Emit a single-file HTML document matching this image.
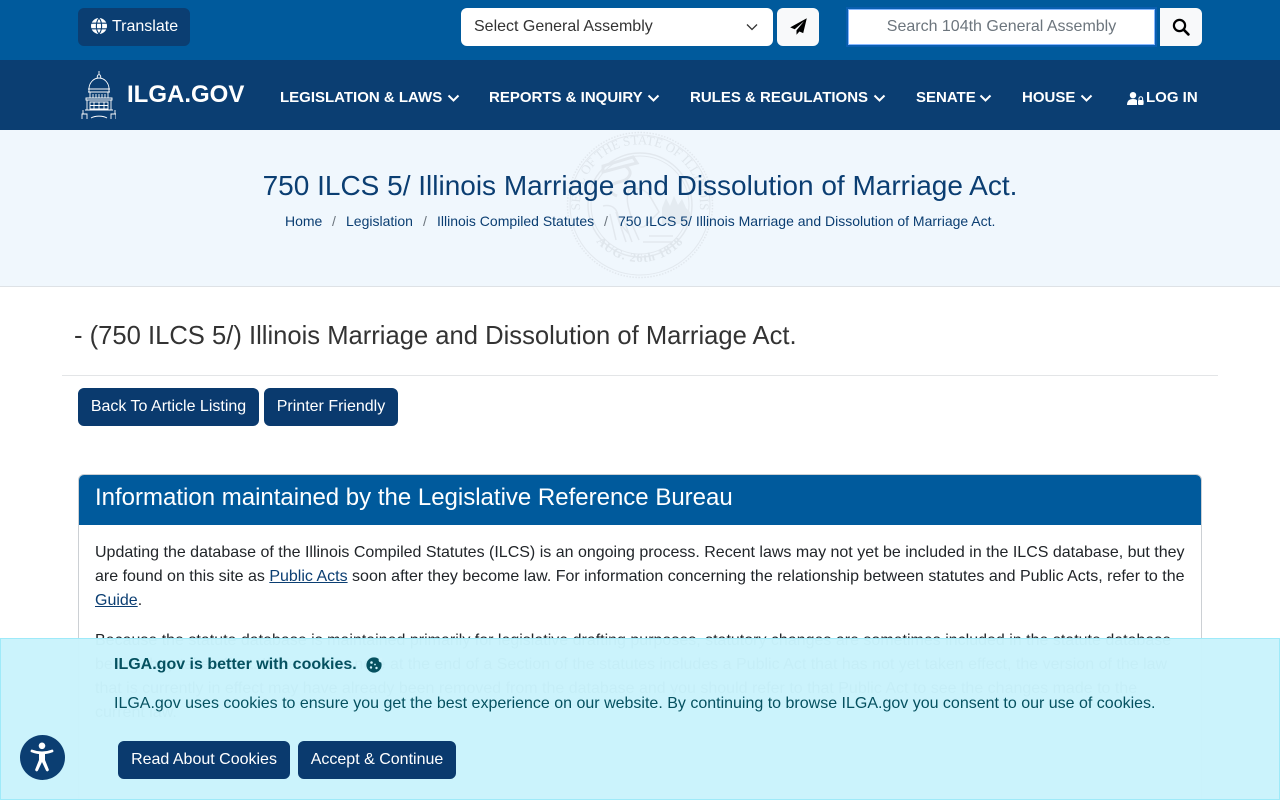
<!DOCTYPE html>
<html lang="en"><head><meta charset="utf-8"><title>750 ILCS 5/ Illinois Marriage and Dissolution of Marriage Act.</title>
<style>
*{box-sizing:border-box}
html,body{margin:0;padding:0;width:1280px;height:800px;overflow:hidden;background:#fff;font-family:"Liberation Sans",sans-serif;font-size:16px;color:#212529}
#w{position:relative;width:1280px;height:800px;overflow:hidden}
.a{position:absolute;white-space:nowrap}
a{color:inherit;text-decoration:none}
.btn{position:absolute;height:38px;line-height:36px;background:#0a3a6e;border:1px solid #0a3a6e;color:#fff;border-radius:6px;text-align:center;white-space:nowrap}
.nav{position:absolute;top:88px;height:20px;line-height:20px;color:#fff;font-weight:700;font-size:15px;white-space:nowrap}
.ch{position:absolute;top:94px}
.p{position:absolute;left:95px;width:1095px;line-height:24px;color:#212529;white-space:nowrap}
</style></head><body><div id="w">
<div class="a" style="left:0;top:0;width:1280px;height:60px;background:#005a9c"></div>
<div class="a" style="left:0;top:60px;width:1280px;height:70px;background:#0b3e72"></div>

<div class="btn" style="left:78px;top:8px;width:112px;background:#0b3e72;border-color:#0b3e72;text-align:left;padding-left:33px">Translate</div>
<svg class="a" style="left:91px;top:18px" width="16" height="16" viewBox="0 0 16 16"><circle cx="8" cy="8" r="8" fill="#fff"/><path d="M0 5.2h16M0 10.8h16M8 0C4.5 4 4.5 12 8 16M8 0c3.500 4 3.500 12 0 16" stroke="#0b3e72" stroke-width="1.100" fill="none"/></svg>

<div class="a" style="left:461px;top:8px;width:312px;height:38px;background:#fff;border-radius:6px;line-height:37px;padding-left:13px;color:#333">Select General Assembly</div>
<svg class="a" style="left:746px;top:23px" width="12" height="8" viewBox="0 0 12 8"><path d="M1 1.500l5 5 5-5" stroke="#333" stroke-width="1.300" fill="none"/></svg>
<div class="a" style="left:777px;top:8px;width:42px;height:38px;background:#f8f9fa;border-radius:6px"></div>
<svg class="a" style="left:790px;top:18px" width="17" height="17" viewBox="0 0 17 17"><path d="M16.800.2L.2 9.400l4.500 1.900L14 3.200 6.500 12.400V16.800l2.900-3.300 3.800 1.600z" fill="#000"/></svg>

<div class="a" style="left:846px;top:7px;width:311px;height:40px;background:#fff;border:2px solid #0a5eb0;box-shadow:inset 0 0 0 1px #86b7fe;line-height:36px;text-align:center;color:#6c757d">Search 104th General Assembly</div>
<div class="a" style="left:1160px;top:8px;width:42px;height:38px;background:#f8f9fa;border-radius:0 6px 6px 0"></div>
<svg class="a" style="left:1172px;top:18px" width="18" height="18" viewBox="0 0 18 18"><circle cx="7.500" cy="7.500" r="5.600" stroke="#000" stroke-width="2.200" fill="none"/><path d="M11.600 11.600l4.800 4.800" stroke="#000" stroke-width="2.600" stroke-linecap="round"/></svg>

<svg class="a" style="left:80px;top:70px" width="36" height="50" viewBox="0 0 36 50" fill="none" stroke="#fff" stroke-width=".9">
<path d="M19 1v3M17.200 8c0-4.500 3.600-4.500 3.600 0M9 19c0-6 4.500-11 10-11s10 5 10 11M8 19h22M9 19v3M29 19v3M8 22h22"/>
<path d="M10 22v6M28 22v6M13 24v4M16 24v4M19 24v4M22 24v4M25 24v4"/>
<path d="M6 28h26v2H6zM7 30v10M31 30v10M10 32h18v7H10zM14 32v7M19 32v7M24 32v7M10 35.500h18M5 40h28"/>
<path d="M2 49v-5h5v5M31 49v-5h5v5M3 44v-4M35 44v-4M11 48c4-2.500 12-2.500 16 0"/>
</svg>
<div class="a" style="left:127px;top:80px;font-size:24px;line-height:30px;font-weight:700;color:#fff">ILGA.GOV</div>

<div class="nav" style="left:280px">LEGISLATION &amp; LAWS</div>
<div class="nav" style="left:489px">REPORTS &amp; INQUIRY</div>
<div class="nav" style="left:690px">RULES &amp; REGULATIONS</div>
<div class="nav" style="left:916px">SENATE</div>
<div class="nav" style="left:1022px">HOUSE</div>
<div class="nav" style="left:1146px">LOG IN</div>
<svg class="ch" style="left:447px" width="13" height="9" viewBox="0 0 13 9"><path d="M1.500 1.500l5 5 5-5" stroke="#fff" stroke-width="2" fill="none"/></svg>
<svg class="ch" style="left:647px" width="13" height="9" viewBox="0 0 13 9"><path d="M1.500 1.500l5 5 5-5" stroke="#fff" stroke-width="2" fill="none"/></svg>
<svg class="ch" style="left:873px" width="13" height="9" viewBox="0 0 13 9"><path d="M1.500 1.500l5 5 5-5" stroke="#fff" stroke-width="2" fill="none"/></svg>
<svg class="ch" style="left:979px" width="13" height="9" viewBox="0 0 13 9"><path d="M1.500 1.500l5 5 5-5" stroke="#fff" stroke-width="2" fill="none"/></svg>
<svg class="ch" style="left:1080px" width="13" height="9" viewBox="0 0 13 9"><path d="M1.500 1.500l5 5 5-5" stroke="#fff" stroke-width="2" fill="none"/></svg>
<svg class="a" style="left:1127px;top:92px" width="17" height="13" viewBox="0 0 17 13" fill="#fff"><circle cx="6" cy="3.200" r="3.200"/><path d="M0 13c0-4 2-6 6-6 2 0 3 .4 4 1.200V13z"/><rect x="11" y="8" width="5.600" height="5" rx="1"/><path d="M12 8V6.500a1.800 1.800 0 0 1 3.600 0V8" fill="none" stroke="#fff"/></svg>

<div class="a" style="left:0;top:130px;width:1280px;height:157px;background:#f0f7fd;border-bottom:1px solid #dee2e6"></div>
<svg class="a" style="left:565px;top:130px" width="150" height="150" viewBox="0 0 150 150" fill="none" stroke="#e2e8ee">
<circle cx="75" cy="75" r="72.500" stroke-width="1.500" stroke-dasharray="1.500 1.500"/><circle cx="75" cy="75" r="70"/><circle cx="75" cy="75" r="52" stroke-width="1.500"/><circle cx="75" cy="75" r="49"/>
<path id="sa" d="M18.500 94.500a60 60 0 1 1 113 0" stroke="none"/><path id="sb" d="M20 90a57 57 0 0 0 110 0" stroke="none"/>
<text font-family="Liberation Serif,serif" font-size="13" fill="#dfe6ec" stroke="none" text-anchor="middle"><textPath href="#sa" startOffset="50%">SEAL OF THE STATE OF ILLINOIS</textPath></text>
<text font-family="Liberation Serif,serif" font-size="12.500" font-weight="700" fill="#dfe6ec" stroke="none" text-anchor="middle" letter-spacing="1"><textPath href="#sb" startOffset="50%">AUG. 26th 1818</textPath></text>
<path d="M38 36l30-9 4 6-12 3-22 6zM60 36c10 6 4 14-6 16s-12 10-2 14" stroke-width="3"/>
<path d="M38 76c8-2 14 2 15 10s6 12 11 18M45 84l6 26M51 82l10 30M58 88l9 24M66 92l8 18M64 60c8-4 18 0 22 8l8 14-14 14c-6 4-12-4-14-10s-6-18-2-26z" stroke-width="1.500"/>
<path d="M97 94V78l4-10 4 8 4-10 4 9 4-6 4 9 4 4v12z" fill="#e4ebf1" stroke="none"/>
<path d="M78 112h30M84 106h24" stroke-width="1.500"/>
</svg>
<div class="a" style="left:0;top:169px;width:1280px;text-align:center;font-size:28px;line-height:34px;color:#0b3e72">750 ILCS 5/ Illinois Marriage and Dissolution of Marriage Act.</div>
<div class="a" style="left:285px;top:212px;font-size:14px;line-height:18px;color:#0b3e72">Home</div>
<div class="a" style="left:332px;top:212px;font-size:14px;line-height:18px;color:#6c757d">/</div>
<div class="a" style="left:346px;top:212px;font-size:14px;line-height:18px;color:#0b3e72">Legislation</div>
<div class="a" style="left:423px;top:212px;font-size:14px;line-height:18px;color:#6c757d">/</div>
<div class="a" style="left:437px;top:212px;font-size:14px;line-height:18px;color:#0b3e72">Illinois Compiled Statutes</div>
<div class="a" style="left:604px;top:212px;font-size:14px;line-height:18px;color:#6c757d">/</div>
<div class="a" style="left:618px;top:212px;font-size:14px;line-height:18px;color:#0b3e72">750 ILCS 5/ Illinois Marriage and Dissolution of Marriage Act.</div>

<div class="a" style="left:74px;top:321px;font-size:25.600px;line-height:30px;color:#333">- (750 ILCS 5/) Illinois Marriage and Dissolution of Marriage Act.</div>
<div class="a" style="left:62px;top:375px;width:1156px;height:1px;background:#e3e5e7"></div>
<div class="btn" style="left:78px;top:388px;width:181px">Back To Article Listing</div>
<div class="btn" style="left:264px;top:388px;width:134px">Printer Friendly</div>

<div class="a" style="left:78px;top:474px;width:1124px;height:340px;border:1px solid #ccd0d4;border-radius:6px;overflow:hidden">
<div style="height:50px;background:#005a9c;color:#fff;font-size:24px;line-height:46px;padding-left:16px">Information maintained by the Legislative Reference Bureau</div>
</div>
<div class="p" style="top:541px">Updating the database of the Illinois Compiled Statutes (ILCS) is an ongoing process. Recent laws may not yet be included in the ILCS database, but they<br>are found on this site as <a style="color:#0b3e72;text-decoration:underline">Public Acts</a> soon after they become law. For information concerning the relationship between statutes and Public Acts, refer to the<br><a style="color:#0b3e72;text-decoration:underline">Guide</a>.</div>
<div class="p" style="top:629px">Because the statute database is maintained primarily for legislative drafting purposes, statutory changes are sometimes included in the statute database<br>before they take effect. If the source note at the end of a Section of the statutes includes a Public Act that has not yet taken effect, the version of the law<br>that is currently in effect may have already been removed from the database and you should refer to that Public Act to see the changes made to the<br>current law.</div>

<div class="a" style="left:0;top:638px;width:1280px;height:162px;background:rgba(202,243,252,.975);border:1px solid #9eeaf9"></div>
<div class="a" style="left:114px;top:656px;line-height:18px;font-weight:700;color:#055160">ILGA.gov is better with cookies.</div>
<svg class="a" style="left:366px;top:657px" width="16" height="16" viewBox="0 0 16 16"><circle cx="8" cy="8" r="7.600" fill="#055160"/><circle cx="5.500" cy="5.500" r="1.300" fill="#cff4fc"/><circle cx="5" cy="10.500" r="1.200" fill="#cff4fc"/><circle cx="10.500" cy="11" r="1.200" fill="#cff4fc"/><circle cx="9" cy="7.500" r=".9" fill="#cff4fc"/><circle cx="15" cy="3" r="2.400" fill="#cff4fc"/></svg>
<div class="a" style="left:114px;top:695px;line-height:18px;color:#055160">ILGA.gov uses cookies to ensure you get the best experience on our website. By continuing to browse ILGA.gov you consent to our use of cookies.</div>
<div class="btn" style="left:118px;top:741px;width:172px">Read About Cookies</div>
<div class="btn" style="left:298px;top:741px;width:158px">Accept &amp; Continue</div>
<svg class="a" style="left:20px;top:735px" width="45" height="45" viewBox="0 0 45 45"><circle cx="22.500" cy="22.500" r="22.500" fill="#0b3e72"/><circle cx="22" cy="10.800" r="3.300" fill="#fff"/><path d="M12 16c6.500 2.500 13.500 2.500 20 0" stroke="#fff" stroke-width="2.800" stroke-linecap="round" fill="none"/><path d="M19 17h6v8l3.800 9.500a1.500 1.500 0 0 1-2.800 1L22 27l-4 8.500a1.500 1.500 0 0 1-2.800-1L19 25z" fill="#fff"/></svg>
</div></body></html>
